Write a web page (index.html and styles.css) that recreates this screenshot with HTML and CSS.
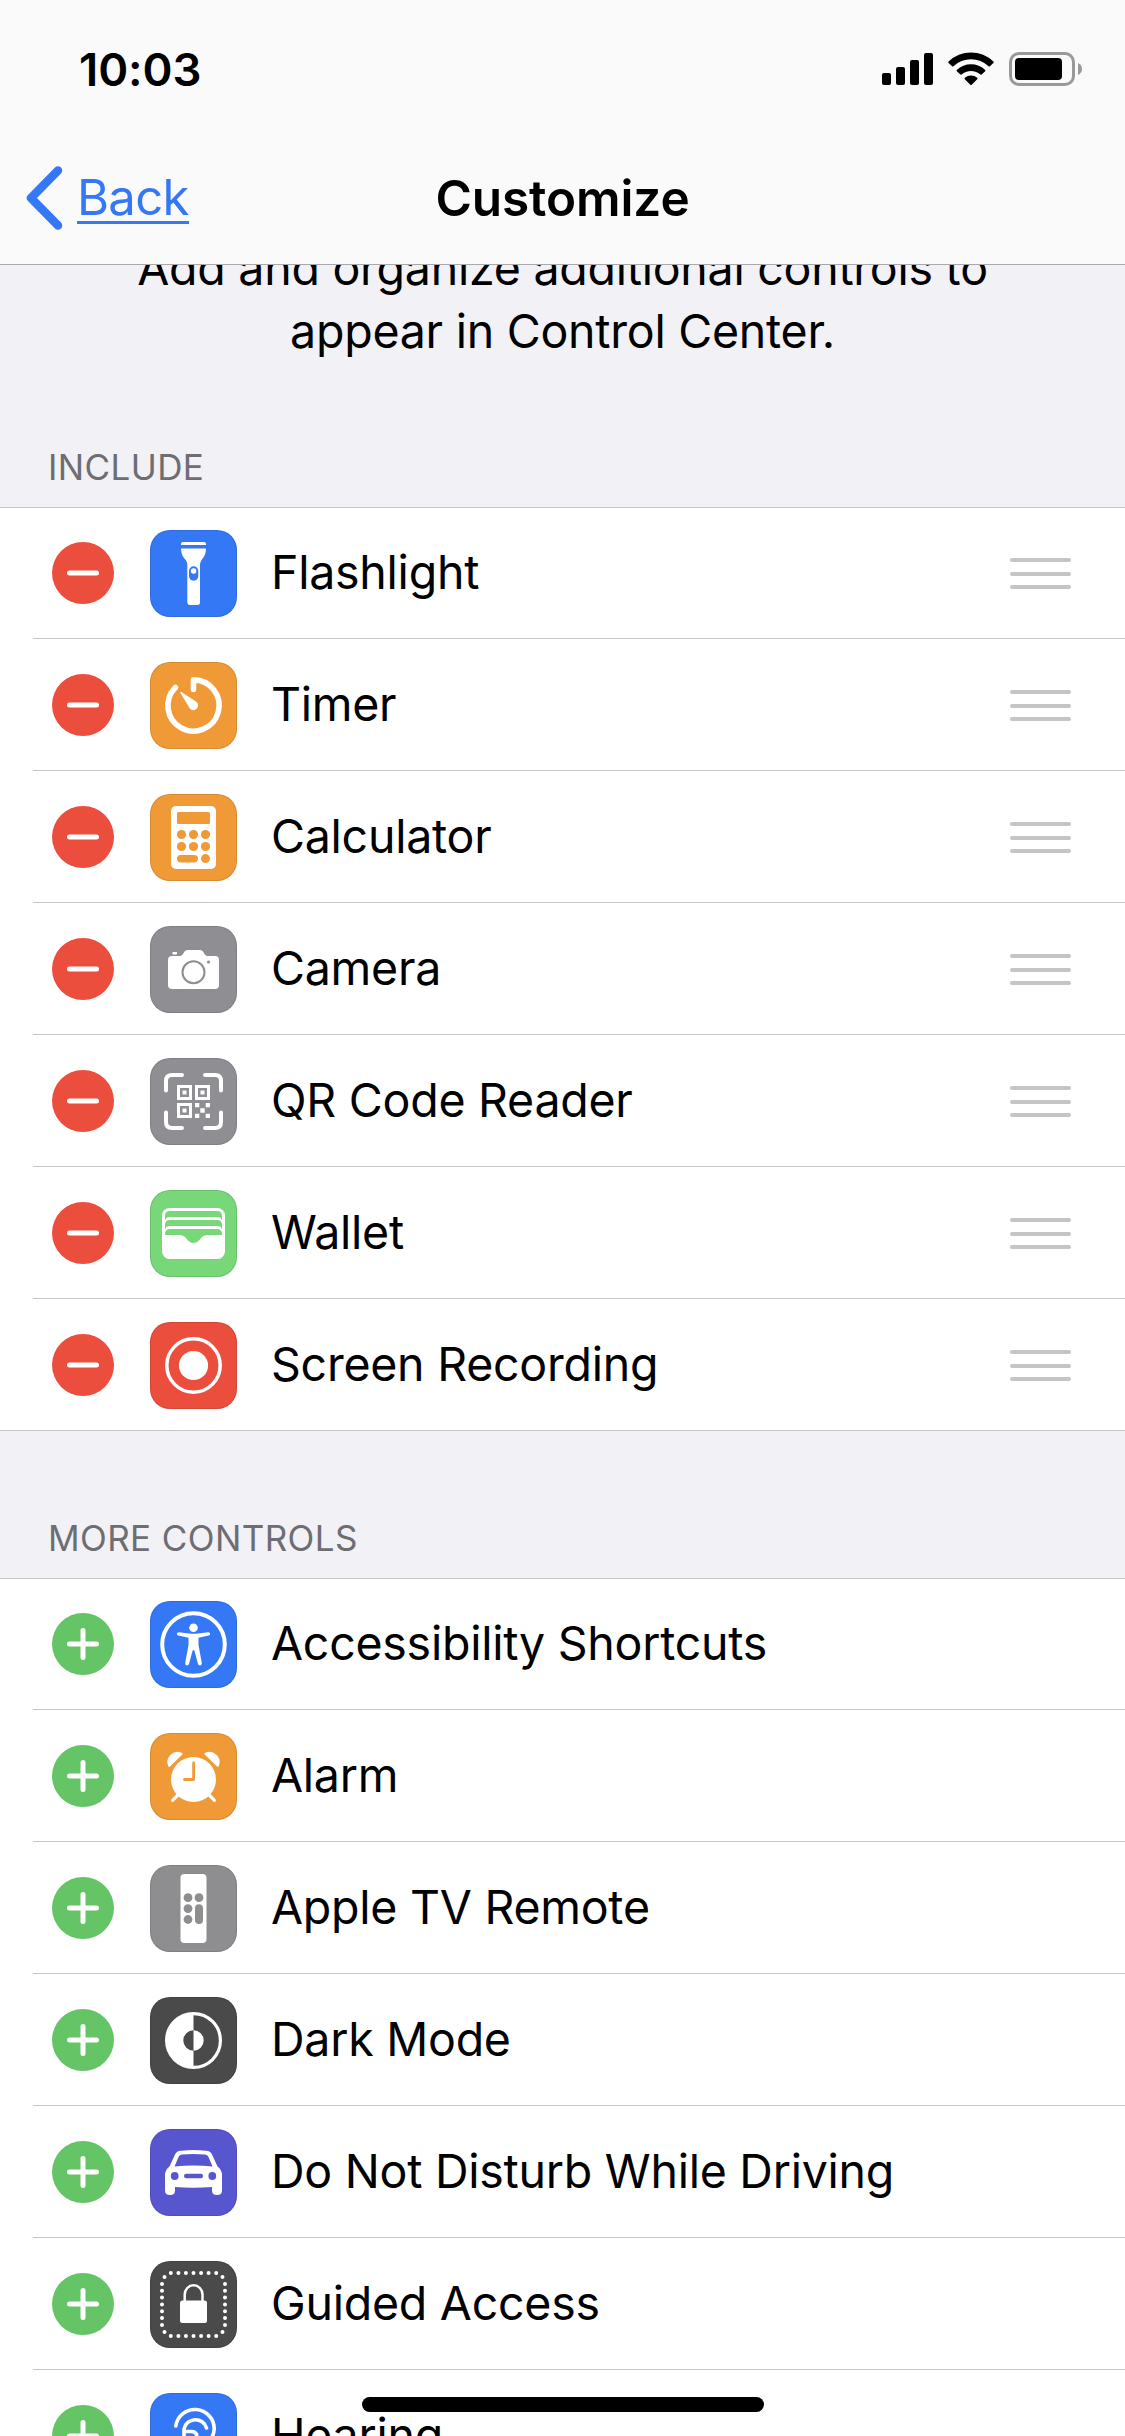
FILE: index.html
```html
<!DOCTYPE html>
<html lang="en">
<head>
    <meta charset="UTF-8">
    <title>Customize</title>
    <link rel="stylesheet" href="styles.css">
</head>
<body>
    <header class="header">
        <div class="status-bar">
            <span class="time">10:03</span>
            <svg class="signal" width="51" height="34" viewBox="0 0 51 34">
                <rect x="0" y="21" width="9" height="12" rx="2"/>
                <rect x="14" y="15" width="9" height="18" rx="2"/>
                <rect x="28" y="8" width="9" height="25" rx="2"/>
                <rect x="42" y="1" width="9" height="32" rx="2"/>
            </svg>
            <svg class="wifi" width="46" height="34" viewBox="0 0 46 34">
                <path d="M0.6 9.6A32 32 0 0 1 45.4 9.6Q46 10.3 45.4 11L41.9 14.3Q41.3 14.8 40.6 14.2A25.5 25.5 0 0 0 5.4 14.2Q4.7 14.8 4.1 14.3L0.6 11Q0 10.3 0.6 9.6Z"/>
                <path d="M8.8 18A20.5 20.5 0 0 1 37.2 18Q37.8 18.6 37.2 19.2L33.6 22.6Q33 23.1 32.4 22.6A13.8 13.8 0 0 0 13.6 22.6Q13 23.1 12.4 22.6L8.8 19.2Q8.2 18.6 8.8 18Z"/>
                <path d="M16.8 25.8A9.6 9.6 0 0 1 29.2 25.8Q29.9 26.5 29.2 27.2L23.7 32.7Q23 33.4 22.3 32.7L16.8 27.2Q16.1 26.5 16.8 25.8Z"/>
            </svg>
            <svg class="battery" width="74" height="34" viewBox="0 0 74 34">
                <rect x="1.5" y="1.5" width="63" height="31" rx="8.5" fill="none" stroke="#999" stroke-width="3"/>
                <rect x="6" y="6" width="47" height="22" rx="4"/>
                <path d="M69 11Q73 13 73 17T69 23Z" fill="#999"/>
            </svg>
        </div>
        <div class="nav-bar">
            <a class="back">
                <svg width="42" height="66" viewBox="0 0 42 66"><path d="M33 5.5L6 33L33 60.5" fill="none" stroke="#3478f6" stroke-width="8.5" stroke-linecap="round" stroke-linejoin="round"/></svg>
                <span class="back-text">Back</span>
            </a>
            <h1 class="title">Customize</h1>
        </div>
    </header>

    <main class="content">
        <p class="intro">Add and organize additional controls to<br>appear in Control Center.</p>

        <h2 class="section-title">INCLUDE</h2>
        <ul class="list">
            <li class="row">
                <svg class="toggle" viewBox="0 0 62 62"><circle cx="31" cy="31" r="31" fill="#eb4e3d"/><path d="M17.5 31H44.5"/></svg>
                <svg class="icon blue" viewBox="0 0 87 87">
                    <path class="w" d="M31 15V14Q31 12 33 12H54Q56 12 56 14V15Z"/>
                    <path class="w" d="M31 18.5H56Q56 24 53 28Q50 31.5 50 34V72Q50 75 47.5 75H40Q37.3 75 37.3 72V34Q37.3 31.5 34 28Q31 24 31 18.5Z"/>
                    <rect class="c" x="39" y="36.3" width="9.3" height="14.4" rx="4.65"/>
                    <circle class="w" cx="43.6" cy="41" r="2.8"/>
                </svg>
                <span class="label">Flashlight</span>
                <span class="handle"><i></i><i></i><i></i></span>
            </li>
            <li class="row">
                <svg class="toggle" viewBox="0 0 62 62"><circle cx="31" cy="31" r="31" fill="#eb4e3d"/><path d="M17.5 31H44.5"/></svg>
                <svg class="icon orange" viewBox="0 0 87 87">
                    <path class="s" stroke-width="5.6" stroke-linejoin="round" d="M43.5 27.5V17.9A25.6 25.6 0 1 1 25.4 25.4"/>
                    <path class="w" d="M31.4 30Q30 29.4 30.4 31L39.5 46A4.7 4.7 0 1 0 46.3 39.7Z"/>
                </svg>
                <span class="label">Timer</span>
                <span class="handle"><i></i><i></i><i></i></span>
            </li>
            <li class="row">
                <svg class="toggle" viewBox="0 0 62 62"><circle cx="31" cy="31" r="31" fill="#eb4e3d"/><path d="M17.5 31H44.5"/></svg>
                <svg class="icon orange" viewBox="0 0 87 87">
                    <rect class="w" x="21" y="12" width="45" height="63" rx="5"/>
                    <rect class="c" x="27" y="18" width="33" height="12" rx="1.5"/>
                    <g class="c">
                        <circle cx="31.5" cy="40.5" r="4.6"/><circle cx="43.5" cy="40.5" r="4.6"/><circle cx="55.5" cy="40.5" r="4.6"/>
                        <circle cx="31.5" cy="52.5" r="4.6"/><circle cx="43.5" cy="52.5" r="4.6"/><circle cx="55.5" cy="52.5" r="4.6"/>
                        <rect x="27" y="61" width="21" height="7.4" rx="3.7"/><circle cx="55.5" cy="64.6" r="4.5"/>
                    </g>
                </svg>
                <span class="label">Calculator</span>
                <span class="handle"><i></i><i></i><i></i></span>
            </li>
            <li class="row">
                <svg class="toggle" viewBox="0 0 62 62"><circle cx="31" cy="31" r="31" fill="#eb4e3d"/><path d="M17.5 31H44.5"/></svg>
                <svg class="icon gray" viewBox="0 0 87 87">
                    <path class="w" d="M22 30H30Q32 30 33 28L34.5 25.5Q35.5 24 37.5 24H50Q52 24 53 25.5L54.5 28Q55.5 30 57.5 30H65Q69 30 69 34V59Q69 63 65 63H22Q18 63 18 59V34Q18 30 22 30Z"/>
                    <rect class="w" x="22.3" y="26" width="4.8" height="2.4" rx="0.8"/>
                    <circle class="cs" cx="43.5" cy="46.3" r="11" stroke-width="2"/>
                    <circle class="c" cx="58.5" cy="36" r="1.6"/>
                </svg>
                <span class="label">Camera</span>
                <span class="handle"><i></i><i></i><i></i></span>
            </li>
            <li class="row">
                <svg class="toggle" viewBox="0 0 62 62"><circle cx="31" cy="31" r="31" fill="#eb4e3d"/><path d="M17.5 31H44.5"/></svg>
                <svg class="icon gray" viewBox="0 0 87 87">
                    <path class="s" stroke-width="4" d="M16 32.5V23Q16 17 22 17H32M55 17H65Q71 17 71 23V32.5M71 54.5V64Q71 70 65 70H55M32 70H22Q16 70 16 64V54.5"/>
                    <g class="q"><rect x="28.5" y="28.5" width="12" height="12"/><rect x="46.5" y="28.5" width="12" height="12"/><rect x="28.5" y="46.5" width="12" height="12"/></g>
                    <path class="w" d="M32.5 32.5h4v4h-4zM50.5 32.5h4v4h-4zM32.5 50.5h4v4h-4zM45 45h4.3v4.3h-4.3zM55.7 45h4.3v4.3h-4.3zM50.3 50.3h4.4v4.4h-4.4zM45 55.7h4.3v4.3h-4.3zM55.7 55.7h4.3v4.3h-4.3z"/>
                </svg>
                <span class="label">QR Code Reader</span>
                <span class="handle"><i></i><i></i><i></i></span>
            </li>
            <li class="row">
                <svg class="toggle" viewBox="0 0 62 62"><circle cx="31" cy="31" r="31" fill="#eb4e3d"/><path d="M17.5 31H44.5"/></svg>
                <svg class="icon green" viewBox="0 0 87 87">
                    <rect class="w" x="12" y="18" width="63" height="51" rx="7.5"/>
                    <path class="c" d="M15 30V26Q15 21 20 21H67Q72 21 72 26V30Z"/>
                    <path class="w" d="M15 39V32Q15 27 20 27H67Q72 27 72 32V39Z"/>
                    <path class="c" d="M15 39V35Q15 30 20 30H67Q72 30 72 35V39Z"/>
                    <path class="w" d="M15 45V41Q15 36 20 36H67Q72 36 72 41V45Z"/>
                    <path class="c" d="M15 45V44Q15 39 20 39H67Q72 39 72 44V45H57Q53.5 45 51.5 47.5L49 50.5Q46.5 53 43.5 53T38 50.5L35.5 47.5Q33.5 45 30 45Z"/>
                </svg>
                <span class="label">Wallet</span>
                <span class="handle"><i></i><i></i><i></i></span>
            </li>
            <li class="row">
                <svg class="toggle" viewBox="0 0 62 62"><circle cx="31" cy="31" r="31" fill="#eb4e3d"/><path d="M17.5 31H44.5"/></svg>
                <svg class="icon red" viewBox="0 0 87 87">
                    <circle class="s" cx="43.5" cy="43.5" r="26.7" stroke-width="3.5"/>
                    <circle class="w" cx="43.5" cy="43.5" r="14.6"/>
                </svg>
                <span class="label">Screen Recording</span>
                <span class="handle"><i></i><i></i><i></i></span>
            </li>
        </ul>

        <h2 class="section-title more">MORE CONTROLS</h2>
        <ul class="list">
            <li class="row">
                <svg class="toggle" viewBox="0 0 62 62"><circle cx="31" cy="31" r="31" fill="#65c466"/><path d="M17.5 31H44.5M31 17.5V44.5"/></svg>
                <svg class="icon blue" viewBox="0 0 87 87">
                    <circle class="s" cx="43.5" cy="43.5" r="31.3" stroke-width="4"/>
                    <circle class="w" cx="43.5" cy="26.7" r="4.3"/>
                    <path class="w" d="M28.7 31.2L39 32.6Q43.5 33 48 32.6L58.3 31.2Q60 31.2 60.2 32.8Q60.2 34.3 58.7 34.6L48.5 36.8V44L51.8 62Q52 64 50.3 64.4Q48.6 64.5 48 63L44.5 50Q43.5 48 42.5 50L39 63Q38.4 64.5 36.7 64.4Q35 64 35.2 62L38.5 44V36.8L28.3 34.6Q26.8 34.3 26.8 32.8Q27 31.2 28.7 31.2Z"/>
                </svg>
                <span class="label">Accessibility Shortcuts</span>
            </li>
            <li class="row">
                <svg class="toggle" viewBox="0 0 62 62"><circle cx="31" cy="31" r="31" fill="#65c466"/><path d="M17.5 31H44.5M31 17.5V44.5"/></svg>
                <svg class="icon orange" viewBox="0 0 87 87">
                    <path class="w" d="M32.3 21.5Q33.2 20.6 32 19.9A10.2 10.2 0 0 0 18.2 33Q18.8 34.7 20 33.6ZM54.7 21.5Q53.8 20.6 55 19.9A10.2 10.2 0 0 1 68.8 33Q68.2 34.7 67 33.6Z"/>
                    <circle class="w" cx="43.5" cy="46.5" r="22.5"/>
                    <path class="s" stroke-width="3.2" d="M28 62L22.6 67.4M59 62L64.4 67.4"/>
                    <path class="cs" stroke-width="2.8" stroke-linecap="round" stroke-linejoin="round" d="M43.6 30V46.5H34.5"/>
                </svg>
                <span class="label">Alarm</span>
            </li>
            <li class="row">
                <svg class="toggle" viewBox="0 0 62 62"><circle cx="31" cy="31" r="31" fill="#65c466"/><path d="M17.5 31H44.5M31 17.5V44.5"/></svg>
                <svg class="icon remote" viewBox="0 0 87 87">
                    <rect class="w" x="30.5" y="9" width="26" height="69" rx="4"/>
                    <g class="c">
                        <circle cx="38" cy="32.7" r="4.4"/><circle cx="49" cy="32.7" r="4.4"/>
                        <circle cx="38" cy="43.6" r="4.4"/><circle cx="38" cy="54.5" r="4.4"/>
                        <rect x="45" y="39.2" width="8" height="19.7" rx="4"/>
                    </g>
                </svg>
                <span class="label">Apple TV Remote</span>
            </li>
            <li class="row">
                <svg class="toggle" viewBox="0 0 62 62"><circle cx="31" cy="31" r="31" fill="#65c466"/><path d="M17.5 31H44.5M31 17.5V44.5"/></svg>
                <svg class="icon dark" viewBox="0 0 87 87">
                    <circle class="s" cx="43.5" cy="43.5" r="26.9" stroke-width="3.2"/>
                    <path class="w" d="M43.5 16A27.5 27.5 0 0 0 43.5 71V53.7A10.2 10.2 0 0 1 43.5 33.3ZM43.5 33.3A10.2 10.2 0 0 1 43.5 53.7Z"/>
                </svg>
                <span class="label">Dark Mode</span>
            </li>
            <li class="row">
                <svg class="toggle" viewBox="0 0 62 62"><circle cx="31" cy="31" r="31" fill="#65c466"/><path d="M17.5 31H44.5M31 17.5V44.5"/></svg>
                <svg class="icon purple" viewBox="0 0 87 87">
                    <path class="w" d="M31 21.7Q43.5 20.3 56 21.7Q60.5 22 62 25.5L67.5 37.5Q72 41 72 46V61.5Q72 66 67 66T62 61.5V58Q43.5 59.5 25 58V61.5Q25 66 20 66T15 61.5V46Q15 41 19.5 37.5L25 25.5Q26.5 22 31 21.7Z"/>
                    <path class="c" d="M32 25.5Q43.5 24.5 55 25.5Q57.5 25.8 58.5 28L62.5 37.5Q43.5 35.3 24.5 37.5L28.5 28Q29.5 25.8 32 25.5Z"/>
                    <circle class="c" cx="24.7" cy="47" r="3.9"/><circle class="c" cx="62.3" cy="47" r="3.9"/>
                    <rect class="c" x="34" y="44.8" width="19" height="4.5" rx="2.2"/>
                </svg>
                <span class="label">Do Not Disturb While Driving</span>
            </li>
            <li class="row">
                <svg class="toggle" viewBox="0 0 62 62"><circle cx="31" cy="31" r="31" fill="#65c466"/><path d="M17.5 31H44.5M31 17.5V44.5"/></svg>
                <svg class="icon dark" viewBox="0 0 87 87">
                    <path class="s" stroke-width="4" d="M20.8 12h0M28.4 12h0M35.9 12h0M43.5 12h0M51.1 12h0M58.6 12h0M66.2 12h0M72.5 16h0M75 23h0M75 29.8h0M75 36.6h0M75 43.5h0M75 50.3h0M75 57.1h0M75 64h0M72.5 71h0M66.2 75h0M58.6 75h0M51.1 75h0M43.5 75h0M35.9 75h0M28.4 75h0M20.8 75h0M14.5 71h0M12 64h0M12 57.1h0M12 50.3h0M12 43.5h0M12 36.6h0M12 29.8h0M12 23h0M14.5 16h0"/>
                    <rect class="w" x="30" y="39.5" width="27" height="22.5" rx="2.5"/>
                    <path class="s" stroke-width="2.5" d="M34.7 41V33.5A8.9 9.2 0 0 1 52.5 33.5V41"/>
                </svg>
                <span class="label">Guided Access</span>
            </li>
            <li class="row">
                <svg class="toggle" viewBox="0 0 62 62"><circle cx="31" cy="31" r="31" fill="#65c466"/><path d="M17.5 31H44.5M31 17.5V44.5"/></svg>
                <svg class="icon blue" viewBox="0 0 87 87">
                    <path class="s" stroke-width="3.6" d="M25.8 33A19.3 19.3 0 0 1 64.2 36Q64 43 58 49T52 62T42 71"/>
                    <path class="s" stroke-width="3.6" d="M56.5 35A11.6 11.6 0 0 0 34 36V60M34 38.5H42Q47 39 47 44"/>
                </svg>
                <span class="label">Hearing</span>
            </li>
        </ul>
    </main>
    <div class="home-indicator"></div>
</body>
</html>
```
FILE: styles.css
```css
* {
    box-sizing: border-box;
}
html, body {
    height: 100%;
    overflow: hidden;
}
body {
    margin: 0;
    background: #f2f1f6;
    color: #000;
    font-family: Inter, "Liberation Sans", Arial, sans-serif;
    font-size: 46.5px;
    letter-spacing: -0.25px;
    display: flex;
    flex-direction: column;
}
.header {
    flex: none;
    height: 265px;
    background: #fafafb;
    border-bottom: 1px solid #a9a9ac;
}
.status-bar {
    height: 132px;
    padding: 6px 42px 0 79px;
    display: flex;
    align-items: center;
}
.time {
    font-size: 45.5px;
    font-weight: 600;
    letter-spacing: -0.1px;
    margin-right: auto;
}
.wifi {
    margin: 0 15px;
}
.nav-bar {
    height: 132px;
    padding-left: 25px;
    display: grid;
    grid-template-columns: 1fr auto 1fr;
    align-items: center;
}
.back {
    display: flex;
    align-items: center;
    color: #3478f6;
    font-size: 49px;
}
.back-text {
    margin-left: 10px;
    padding-top: 2px;
    letter-spacing: -0.7px;
    line-height: 46px;
    border-bottom: 3px solid #3478f6;
}
.title {
    margin: 0 25px 0 0;
    font-size: 49.5px;
    font-weight: 600;
    letter-spacing: -0.1px;
}
.content {
    flex: 1;
    min-height: 0;
    overflow: hidden;
}
.intro {
    margin: -28px 0 0;
    line-height: 63px;
    text-align: center;
}
.section-title {
    margin: 79px 0 0;
    padding-left: 48px;
    height: 65px;
    color: #6d6d72;
    font-size: 35px;
    font-weight: 400;
    line-height: 50px;
    letter-spacing: 0.4px;
}
.more {
    margin-top: 82px;
}
.list {
    margin: 0;
    padding: 0;
    list-style: none;
    background: #fff;
    box-shadow: inset 0 1px #c6c6c8;
}
.row {
    height: 132px;
    margin-left: 33px;
    padding: 2px 54px 0 19px;
    border-bottom: 1px solid #c6c6c8;
    display: flex;
    align-items: center;
}
.row:last-child {
    margin-left: 0;
    padding-left: 52px;
}
.toggle {
    width: 62px;
    height: 62px;
    margin-bottom: 1px;
    fill: none;
    stroke-linecap: round;
}
.toggle path {
    stroke: #fff;
    stroke-width: 5;
}
.icon {
    width: 87px;
    height: 87px;
    margin: 0 34px 0 36px;
    border-radius: 20px;
    background: var(--c);
    box-shadow: inset 0 0 0 1px rgba(0, 0, 0, 0.1);
}
.blue { --c: #3478f6; }
.orange { --c: #f09a37; }
.gray { --c: #8e8e93; }
.remote { --c: #8e8e90; }
.green { --c: #78d778; }
.red { --c: #eb4e3d; }
.dark { --c: #4a4a4a; }
.purple { --c: #5856ce; }

/* glyph parts: white fill, white stroke, tile colour fill, tile colour stroke */
.w { fill: #fff; }
.s { fill: none; stroke: #fff; stroke-linecap: round; }
.c { fill: var(--c); }
.cs { fill: none; stroke: var(--c); }
.q { fill: none; stroke: #fff; stroke-width: 3; }

.label {
    white-space: nowrap;
    line-height: 60px;
    margin-bottom: 3px;
}
.handle {
    width: 61px;
    margin-left: auto;
    display: flex;
    flex-direction: column;
    gap: 9.5px;
}
.handle i {
    height: 4px;
    border-radius: 2px;
    background: #c5c5c7;
}
.home-indicator {
    position: fixed;
    left: 362px;
    bottom: 24px;
    width: 402px;
    height: 15px;
    border-radius: 8px;
    background: #000;
}
```
